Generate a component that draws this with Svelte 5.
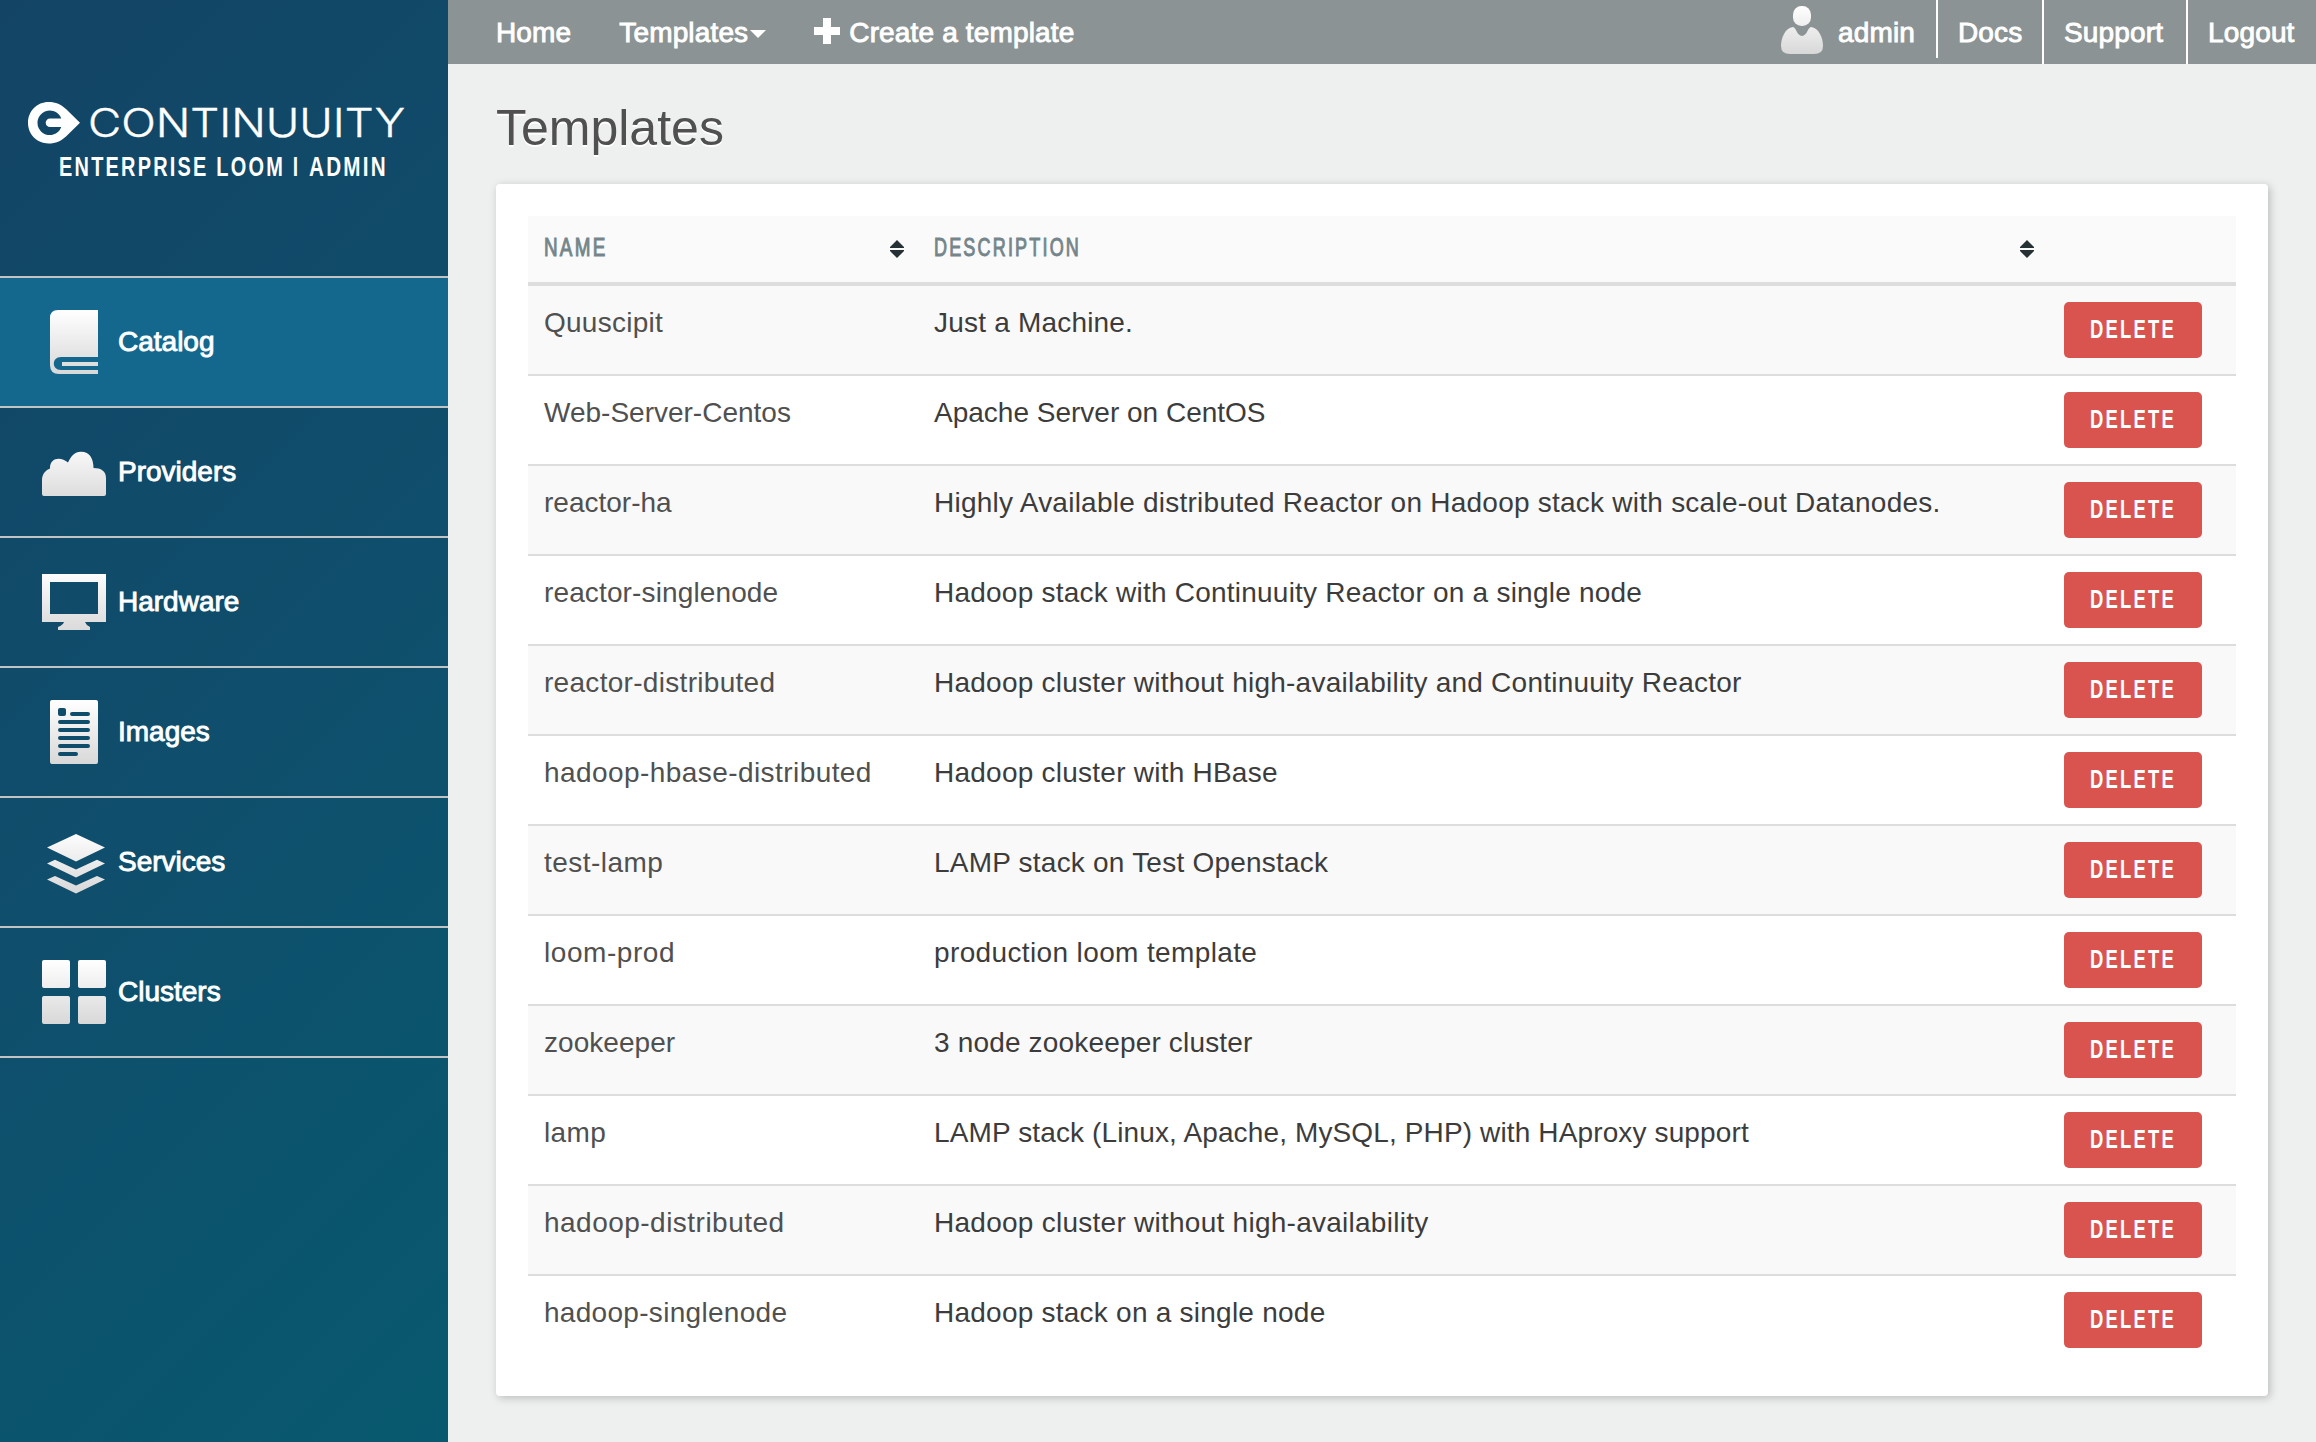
<script>
  const nav = ['Catalog', 'Providers', 'Hardware', 'Images', 'Services', 'Clusters'];
  // ns / ds: letter spacing in px of the name and of the description
  const templates = [
    { name: 'Quuscipit', ns: 0.25, description: 'Just a Machine.', ds: 0.2 },
    { name: 'Web-Server-Centos', ns: 0, description: 'Apache Server on CentOS', ds: 0 },
    { name: 'reactor-ha', ns: 0, description: 'Highly Available distributed Reactor on Hadoop stack with scale-out Datanodes.', ds: 0.24 },
    { name: 'reactor-singlenode', ns: 0.13, description: 'Hadoop stack with Continuuity Reactor on a single node', ds: 0.23 },
    { name: 'reactor-distributed', ns: 0.3, description: 'Hadoop cluster without high-availability and Continuuity Reactor', ds: 0.24 },
    { name: 'hadoop-hbase-distributed', ns: 0.43, description: 'Hadoop cluster with HBase', ds: 0.24 },
    { name: 'test-lamp', ns: 0.45, description: 'LAMP stack on Test Openstack', ds: 0.22 },
    { name: 'loom-prod', ns: 0.55, description: 'production loom template', ds: 0.37 },
    { name: 'zookeeper', ns: 0.05, description: '3 node zookeeper cluster', ds: 0.17 },
    { name: 'lamp', ns: 0.35, description: 'LAMP stack (Linux, Apache, MySQL, PHP) with HAproxy support', ds: 0.13 },
    { name: 'hadoop-distributed', ns: 0.48, description: 'Hadoop cluster without high-availability', ds: 0.26 },
    { name: 'hadoop-singlenode', ns: 0.3, description: 'Hadoop stack on a single node', ds: 0.24 }
  ];
</script>

<!-- Condensed label: the text is squeezed to a fixed width -->
{#snippet condensed(text, width)}
  <svg class="condensed" width={width} height="26" viewBox="0 0 {width} 26">
    <text x="0" y="22" textLength={width} lengthAdjust="spacingAndGlyphs">{text}</text>
  </svg>
{/snippet}

{#snippet sorter()}
  <svg class="sorter" width="14" height="18" viewBox="0 0 14 18">
    <path d="M7 0 14 7v1H0V7zM0 10h14v1l-7 7-7-7z" />
  </svg>
{/snippet}

<div class="page">
  <aside>
    <div class="brand">
      <svg width="448" height="276" viewBox="0 0 448 276">
        <path
          fill="#fff"
          fill-rule="evenodd"
          d="M48.500 102C37 102 28 111.200 28 122.800S37 143.500 48.500 143.500C56 143.500 61 141 66 136.500L80 122.800 66 109C61 104.500 56 102 48.500 102zM61.300 118.500H50a4.300 4.300 0 0 0 0 8.600H61.300A12.300 12.300 0 1 1 61.300 118.500z"
        />
        <text class="wordmark" x="88" y="137" textLength="317" lengthAdjust="spacingAndGlyphs">CONTINUUITY</text>
        <text class="product" x="59" y="176" textLength="226" lengthAdjust="spacingAndGlyphs">ENTERPRISE LOOM</text>
        <text class="bar" x="292.500" y="171.800">|</text>
        <text class="product" x="309" y="176" textLength="79" lengthAdjust="spacingAndGlyphs">ADMIN</text>
      </svg>
    </div>
    <nav>
      {#each nav as item, i}
        <a class="item" class:active={i === 0} href="#{item}">
          <svg class="icon" width="64" height="64" viewBox="0 0 64 64">
            <defs>
              <linearGradient id="shade{i}" gradientUnits="userSpaceOnUse" x1="0" y1="0" x2="0" y2="64">
                <stop offset="0" stop-color="#fff" />
                <stop offset="1" stop-color="#d8d8d8" />
              </linearGradient>
            </defs>
            <g fill="url(#shade{i})" fill-rule="evenodd">
              {#if item === 'Catalog'}
                <path d="M16 0H56V47H19C9.500 47 9.500 60 19 60H56V64H17Q8 64 8 55V8Q8 0 16 0z" />
                <path d="M20 52H56V56H20z" />
              {:else if item === 'Providers'}
                <path d="M2 56Q0 56 0 54V40C0 34 4 30 8 28.500C7.500 17.500 19 16 26 22.500C29 16 33 11.500 39 11.700C48 11.700 51.500 19 51.500 28C59 28 64 31 64 38V54Q64 56 62 56z" />
              {:else if item === 'Hardware'}
                <path d="M0 4H64V52H43Q44 55 48 57V60H16V57Q21 55 22 52H0zM8 12V44H56V12z" />
              {:else if item === 'Images'}
                <path d="M10 0H54Q56 0 56 2V62Q56 64 54 64H10Q8 64 8 62V2Q8 0 10 0zM18 8Q16 8 16 10V14Q16 16 18 16H22Q24 16 24 14V10Q24 8 22 8zM30 12a2 2 0 0 0 0 4H46a2 2 0 0 0 0-4zM18 20a2 2 0 0 0 0 4H46a2 2 0 0 0 0-4zM18 28a2 2 0 0 0 0 4H46a2 2 0 0 0 0-4zM18 36a2 2 0 0 0 0 4H46a2 2 0 0 0 0-4zM18 44a2 2 0 0 0 0 4H46a2 2 0 0 0 0-4zM18 52a2 2 0 0 0 0 4H34a2 2 0 0 0 0-4z" />
              {:else if item === 'Services'}
                <path d="M34 4 63 17.500 34 31.500 5 17.500zM5 33.500 13 29.800 34 39.500 55 29.800 63 33.500 34 47.500zM5 49.500 13 46 34 55.500 55 46 63 49.500 34 63.500z" />
              {:else}
                <rect x="0" y="0" width="28" height="28" rx="2" />
                <rect x="36" y="0" width="28" height="28" rx="2" />
                <rect x="0" y="36" width="28" height="28" rx="2" />
                <rect x="36" y="36" width="28" height="28" rx="2" />
              {/if}
            </g>
          </svg>
          <span>{item}</span>
        </a>
      {/each}
    </nav>
  </aside>

  <div class="main">
    <header>
      <div class="links">
        <a href="#home">Home</a>
        <a class="menu" href="#templates"><span>Templates</span><svg width="16" height="8" viewBox="0 0 16 8"><path d="M0 0H16L8 8z" /></svg></a>
        <a class="create" href="#create">
          <svg width="26" height="26" viewBox="0 0 26 26"><path d="M9 0H17V9H26V17H17V26H9V17H0V9H9z" /></svg>
          <span>Create a template</span>
        </a>
      </div>
      <div class="account">
        <a class="user" href="#admin">
          <svg width="42" height="48" viewBox="0 0 42 48">
            <defs>
              <linearGradient id="person" x1="0" y1="0" x2="0" y2="48" gradientUnits="userSpaceOnUse">
                <stop offset="0" stop-color="#fff" />
                <stop offset="1" stop-color="#d8d8d8" />
              </linearGradient>
            </defs>
            <g fill="url(#person)">
              <rect x="12" y="0" width="18" height="20" rx="8.500" />
              <path class="body" d="M12 21C15 21 16 30 21 30S27 21 30 21C38 22 42 32 42 40Q42 48 33 48H9Q0 48 0 40C0 32 4 22 12 21z" />
            </g>
          </svg>
          <span>admin</span>
        </a>
        <a class="docs" href="#docs">Docs</a>
        <a class="support" href="#support">Support</a>
        <a class="logout" href="#logout">Logout</a>
      </div>
    </header>

    <h1>Templates</h1>

    <section>
      <div class="row head">
        <div class="cell">{@render condensed('NAME', 63.5)}{@render sorter()}</div>
        <div class="cell">{@render condensed('DESCRIPTION', 147)}{@render sorter()}</div>
        <div></div>
      </div>
      {#each templates as t}
        <div class="row line">
          <div class="cell name" style="letter-spacing: {t.ns}px">{t.name}</div>
          <div class="cell" style="letter-spacing: {t.ds}px">{t.description}</div>
          <div class="cell action"><button>{@render condensed('DELETE', 86)}</button></div>
        </div>
      {/each}
    </section>
  </div>
</div>

<style>
  :global(body) {
    margin: 0;
    background: #eef0f0;
  }
  .page {
    display: flex;
    width: 2316px;
    height: 1442px;
    overflow: hidden;
    background: #eef0f0;
    font-family: "Liberation Sans", Arial, sans-serif;
    font-size: 28px;
    color: #3c3c3c;
  }
  svg {
    display: block;
    flex: none;
    overflow: visible;
  }
  a {
    color: #fff;
    text-decoration: none;
    -webkit-text-stroke: 0.9px #fff;
  }
  aside {
    width: 448px;
    flex: none;
    background: linear-gradient(135deg, #134465 0%, #0f4e6c 50%, #08596f 100%);
  }
  .brand {
    height: 276px;
    border-bottom: 2px solid #c1c3c5;
  }
  .brand text {
    fill: #fff;
  }
  .wordmark {
    font-family: Inter, sans-serif;
    font-weight: 300;
    font-size: 40px;
    stroke: #fff;
    stroke-width: 0.4px;
  }
  .product {
    font-size: 27px;
    font-weight: 700;
    letter-spacing: 3px;
  }
  .bar {
    font-size: 21px;
    font-weight: 700;
  }
  .item {
    display: flex;
    align-items: center;
    gap: 12px;
    height: 128px;
    padding-left: 42px;
    border-bottom: 2px solid #c1c3c5;
  }
  .item.active {
    background: #14678d;
  }
  .main {
    flex: 1;
    min-width: 0;
  }
  header {
    display: flex;
    justify-content: space-between;
    height: 64px;
    line-height: 65px;
    letter-spacing: 0.15px;
    background: #8b9394;
  }
  header path {
    fill: #fff;
  }
  header .body {
    fill: url(#person);
  }
  .links,
  .account,
  .menu,
  .create {
    display: flex;
    align-items: center;
  }
  .links {
    height: 64px;
    padding-left: 48px;
    gap: 48px;
  }
  .menu svg {
    margin: 4px 0 0 2px;
  }
  .create {
    gap: 9px;
  }
  .create svg {
    margin-top: -2px;
  }
  .account {
    align-items: stretch;
  }
  .user {
    display: flex;
    gap: 15px;
    height: 58px;
    padding-right: 21px;
    border-right: 2px solid #fff;
  }
  .user svg {
    margin-top: 6px;
  }
  .docs,
  .support,
  .logout {
    box-sizing: border-box;
    padding-left: 20px;
    border-right: 2px solid #fff;
  }
  .docs {
    width: 106px;
  }
  .support {
    width: 144px;
  }
  .logout {
    width: 128px;
    border-right: 0;
  }
  h1 {
    margin: 0;
    padding: 34px 48px 26px;
    line-height: 60px;
    font-size: 50px;
    font-weight: 400;
    color: #505050;
    text-shadow: 0 2px 0 #fff;
  }
  section {
    box-sizing: border-box;
    width: 1772px;
    height: 1212px;
    margin-left: 48px;
    padding: 32px;
    background: #fff;
    border-radius: 4px;
    box-shadow: 2px 2px 8px rgba(0, 0, 0, 0.22);
  }
  .row {
    display: grid;
    grid-template-columns: 390px 1130px 188px;
  }
  .cell {
    padding: 17px 16px 0;
    line-height: 40px;
    white-space: nowrap;
  }
  .action {
    padding-top: 16px;
  }
  .name {
    color: #505050;
  }
  .head {
    height: 66px;
    background: #fafafa;
    border-bottom: 4px solid #ddd;
  }
  .head .cell {
    display: flex;
    justify-content: space-between;
    padding: 18px 14px 0 16px;
  }
  .condensed text {
    font-size: 25px;
    letter-spacing: 3px;
    fill: #75858a;
    stroke: #75858a;
    stroke-width: 1px;
  }
  .sorter {
    margin-top: 6px;
    fill: #263135;
  }
  .line {
    height: 88px;
    border-bottom: 2px solid #ddd;
  }
  .line:nth-child(even) {
    background: #f9f9f9;
  }
  .line:last-child {
    border-bottom: 0;
  }
  button {
    display: block;
    width: 138px;
    height: 56px;
    padding: 0 0 2px 26px;
    border: 0;
    border-radius: 5px;
    background: #d9534f;
  }
  button .condensed text {
    font-weight: 700;
    fill: #fff;
    stroke: none;
  }
</style>
